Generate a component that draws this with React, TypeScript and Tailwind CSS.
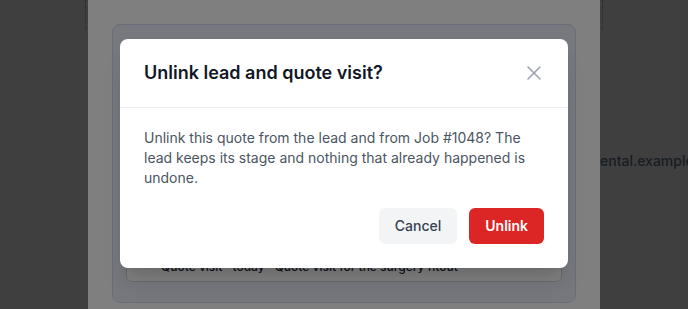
import { X } from 'lucide-react'

const font = { fontFamily: 'Inter, "Noto Sans", sans-serif' }

// Page that sits behind both overlays
function PageBehind() {
  return (
    <div className="h-full w-full bg-white">
      <div className="mx-[85px] h-[30px] border-x border-dotted border-gray-400" />
      <div className="mt-[121px] whitespace-nowrap pl-[600px] text-sm font-medium text-slate-500">
        ental.example.com
      </div>
    </div>
  )
}

// First drawer panel, under the confirm dialog
function LeadPanel() {
  return (
    <div className="absolute inset-y-0 left-1/2 w-full max-w-lg -translate-x-1/2 bg-white px-6 pt-6">
      <div className="flex h-[279px] flex-col justify-end rounded-lg border border-[#d3daf3] bg-[#edf0fb] px-[13px] pb-5">
        <div className="flex h-[60px] items-end rounded-md border border-gray-300 bg-white pb-[6px] pl-[34px]">
          <span className="text-xs font-medium text-gray-800">Quote visit · today · Quote visit for the surgery fitout</span>
        </div>
      </div>
    </div>
  )
}

function ConfirmDialog() {
  return (
    <div className="w-[448px] rounded-lg bg-white shadow-xl">
      <div className="flex items-center justify-between border-b border-gray-200/70 px-6 py-5">
        <h2 className="text-lg font-semibold leading-7 text-gray-900">Unlink lead and quote visit?</h2>
        <button className="-mr-[2px] text-gray-400">
          <X className="h-6 w-6" strokeWidth={1.5} />
        </button>
      </div>
      <div className="px-6 pb-6 pt-5">
        <p className="text-sm leading-5 text-[#4b5563]">
          Unlink this quote from the lead and from Job #1048? The lead keeps its stage and nothing that already happened is undone.
        </p>
        <div className="mt-5 flex justify-end gap-3">
          <button className="rounded-md bg-[#f3f4f6] px-4 py-2 text-sm font-medium leading-5 text-[#374151]">Cancel</button>
          <button className="rounded-md bg-[#dc2626] px-4 py-2 text-sm font-semibold leading-5 text-white">Unlink</button>
        </div>
      </div>
    </div>
  )
}

export default function App() {
  return (
    <div className="relative h-[309px] w-full overflow-hidden" style={font}>
      <PageBehind />
      <div className="absolute inset-0 bg-black/50" />
      <LeadPanel />
      <div className="absolute inset-0 flex items-start justify-center bg-black/50 pt-[39px]">
        <ConfirmDialog />
      </div>
    </div>
  )
}
